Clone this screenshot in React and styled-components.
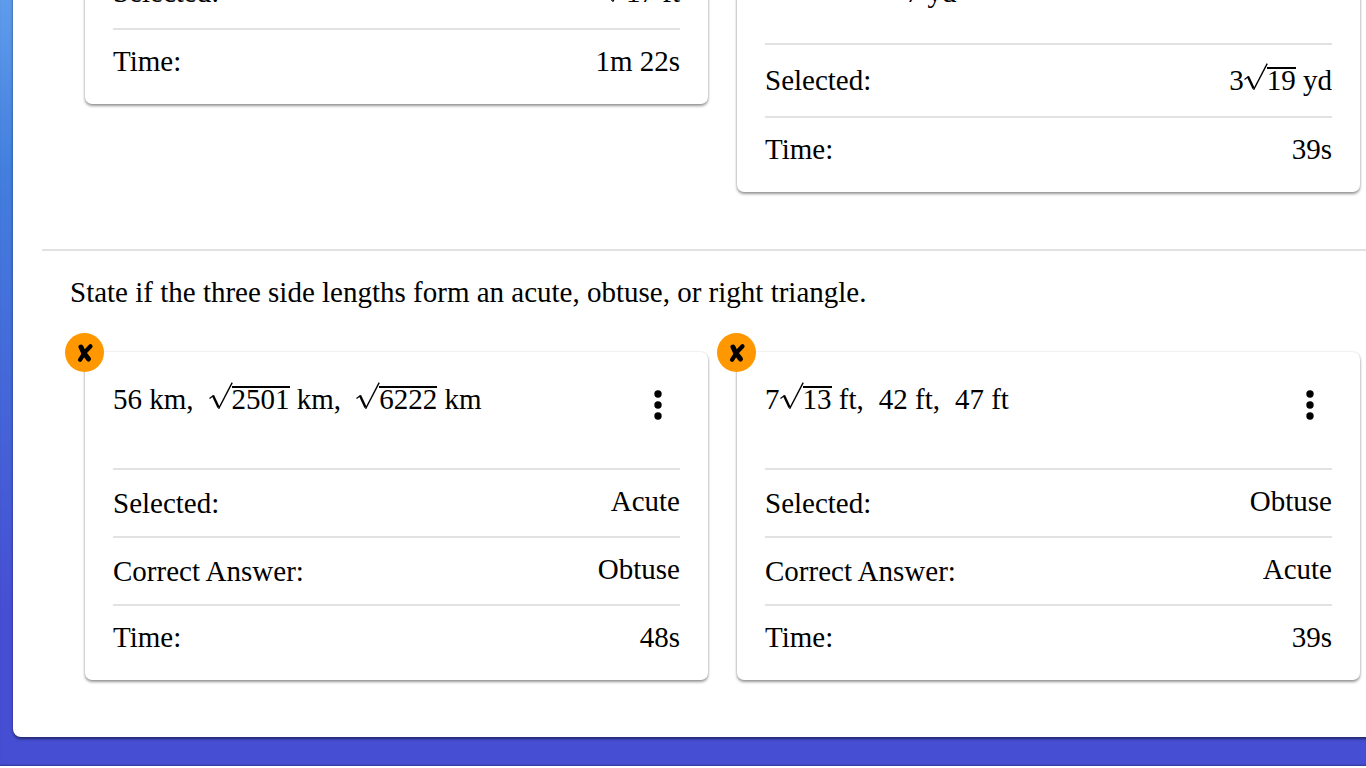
import React from 'react'
import styled, { createGlobalStyle } from 'styled-components'

const GlobalStyle = createGlobalStyle`
  * {
    box-sizing: border-box;
  }

  body {
    margin: 0;
    background: white;
    color: black;
    font-family: "Liberation Serif", "Times New Roman", serif;
    font-size: 29px;
    line-height: 34px;
  }
`

// the page stays scrolled to its end, so everything hangs from the bottom
const Page = styled.div`
  height: 100vh;
  overflow: hidden;
  display: flex;
  flex-direction: column;
  justify-content: flex-end;
  padding-bottom: 2px;
`
const Backdrop = styled.div`
  flex: none;
  padding: 0 0 29px 13px;
  background: linear-gradient(#6ca8f2 0, #437fde 240px, #464fd3 680px, #464fd3 100%);
  box-shadow: inset 0 -2px 2px -1px rgba(0, 0, 0, 0.3);
`
const Sheet = styled.main`
  margin-right: -66px;
  padding: 0 29px 57px;
  background: white;
  border-radius: 8px;
  box-shadow: 0 2px 3px rgba(0, 0, 0, 0.5);
`
const Group = styled.section`
  padding: 0 43px;

  & + & {
    margin-top: 57px;
    border-top: 2px solid #e2e2e2;
  }
`
const Instructions = styled.h2`
  margin: 0 0 0 -15px;
  padding: 24px 0 43px;
  font-size: 29px;
  font-weight: normal;
`
const Cards = styled.div`
  display: grid;
  grid-template-columns: 1fr 1fr;
  gap: 29px;
  align-items: start;
`
const Card = styled.article`
  position: relative;
  padding: 28px 28px 0;
  border-radius: 7px;
  box-shadow: 0 2px 3px rgba(0, 0, 0, 0.4), 0 0 2px rgba(0, 0, 0, 0.15);
`
const Badge = styled.span`
  position: absolute;
  top: -19px;
  left: -20px;
  width: 39px;
  height: 39px;
  border-radius: 50%;
  background: #ff9800;
  display: flex;
  align-items: center;
  justify-content: center;
`
const Problem = styled.div`
  display: flex;
  justify-content: space-between;
  align-items: flex-start;
  height: 88px;
`
const ProblemText = styled.div`
  padding-top: 1px;
`
const Figure = styled.div`
  width: 332px;
  align-self: flex-end;
  padding-bottom: 34px;
  text-align: center;
`
const MenuButton = styled.button`
  width: 44px;
  height: 50px;
  padding: 0;
  border: 0;
  background: none;
  display: flex;
  align-items: center;
  justify-content: center;
`
const Results = styled.dl`
  margin: 0;
`
const Label = styled.dt`
  padding-top: 2px;
`
const Value = styled.dd`
  margin: 0;
`
const Row = styled.div`
  display: flex;
  justify-content: space-between;
  align-items: ${props => (props.$tall ? 'baseline' : 'flex-start')};
  height: ${props => (props.$tall ? 73 : 68)}px;
  padding-top: ${props => (props.$tall ? 16 : 14)}px;
  border-top: 2px solid ${props => (props.$bare ? 'transparent' : '#e2e2e2')};

  &:last-child {
    align-items: baseline;
    height: 76px;
    padding-top: 12px;
  }
`
const Radical = styled.span`
  display: inline-flex;
  align-items: baseline;

  svg {
    width: 24px;
    height: 28px;
    margin: 0 -1px -3px 0;
  }
`
const Radicand = styled.span`
  border-top: 2px solid black;
  line-height: 22px;
`
const Gap = styled.span`
  display: inline-block;
  width: 15px;
`

const Sqrt = ({ children }) => (
  <Radical>
    <svg viewBox="0 0 24 28" fill="none" stroke="black" role="img" aria-label="square root of">
      <path d="M0.5 17.5L4.5 14.5" strokeWidth="1.2" />
      <path d="M4 14.5L9.6 26.5" strokeWidth="2.4" />
      <path d="M9.6 27.8L23.2 1.6" strokeWidth="1.4" />
    </svg>
    <Radicand>{children}</Radicand>
  </Radical>
)

const Wrong = () => (
  <Badge role="img" aria-label="Incorrect">
    <svg width="18" height="20" viewBox="0 0 18 20" fill="none" stroke="black" strokeLinecap="round">
      <path d="M5 4L7.5 9.5L12.5 16" strokeWidth="5" />
      <path d="M14.5 3.2L9 9L4 16.8" strokeWidth="4.2" />
    </svg>
  </Badge>
)

const Menu = () => (
  <MenuButton aria-label="More options">
    <svg width="8" height="30" viewBox="0 0 8 30">
      <circle cx="4" cy="4" r="3.7" />
      <circle cx="4" cy="15" r="3.7" />
      <circle cx="4" cy="26" r="3.7" />
    </svg>
  </MenuButton>
)

const Answered = ({ children, selected, correct, time }) => (
  <Card>
    <Wrong />
    <Problem>
      <ProblemText>{children}</ProblemText>
      <Menu />
    </Problem>
    <Results>
      <Row>
        <Label>Selected:</Label>
        <Value>{selected}</Value>
      </Row>
      <Row>
        <Label>Correct Answer:</Label>
        <Value>{correct}</Value>
      </Row>
      <Row>
        <Label>Time:</Label>
        <Value>{time}</Value>
      </Row>
    </Results>
  </Card>
)

const App = () => (
  <Page>
    <GlobalStyle />
    <Backdrop>
      <Sheet>
        <Group>
          <Cards>
            <Card>
              <Results>
                <Row $tall $bare>
                  <Label>Selected:</Label>
                  <Value><Sqrt>17</Sqrt> ft</Value>
                </Row>
                <Row>
                  <Label>Time:</Label>
                  <Value>1m 22s</Value>
                </Row>
              </Results>
            </Card>
            <Card>
              <Problem>
                <Figure>7 yd</Figure>
              </Problem>
              <Results>
                <Row $tall>
                  <Label>Selected:</Label>
                  <Value>3<Sqrt>19</Sqrt> yd</Value>
                </Row>
                <Row>
                  <Label>Time:</Label>
                  <Value>39s</Value>
                </Row>
              </Results>
            </Card>
          </Cards>
        </Group>
        <Group>
          <Instructions>
            State if the three side lengths form an acute, obtuse, or right triangle.
          </Instructions>
          <Cards>
            <Answered selected="Acute" correct="Obtuse" time="48s">
              56 km,<Gap /><Sqrt>2501</Sqrt> km,<Gap /><Sqrt>6222</Sqrt> km
            </Answered>
            <Answered selected="Obtuse" correct="Acute" time="39s">
              7<Sqrt>13</Sqrt> ft,<Gap />42 ft,<Gap />47 ft
            </Answered>
          </Cards>
        </Group>
      </Sheet>
    </Backdrop>
  </Page>
)

export default App
